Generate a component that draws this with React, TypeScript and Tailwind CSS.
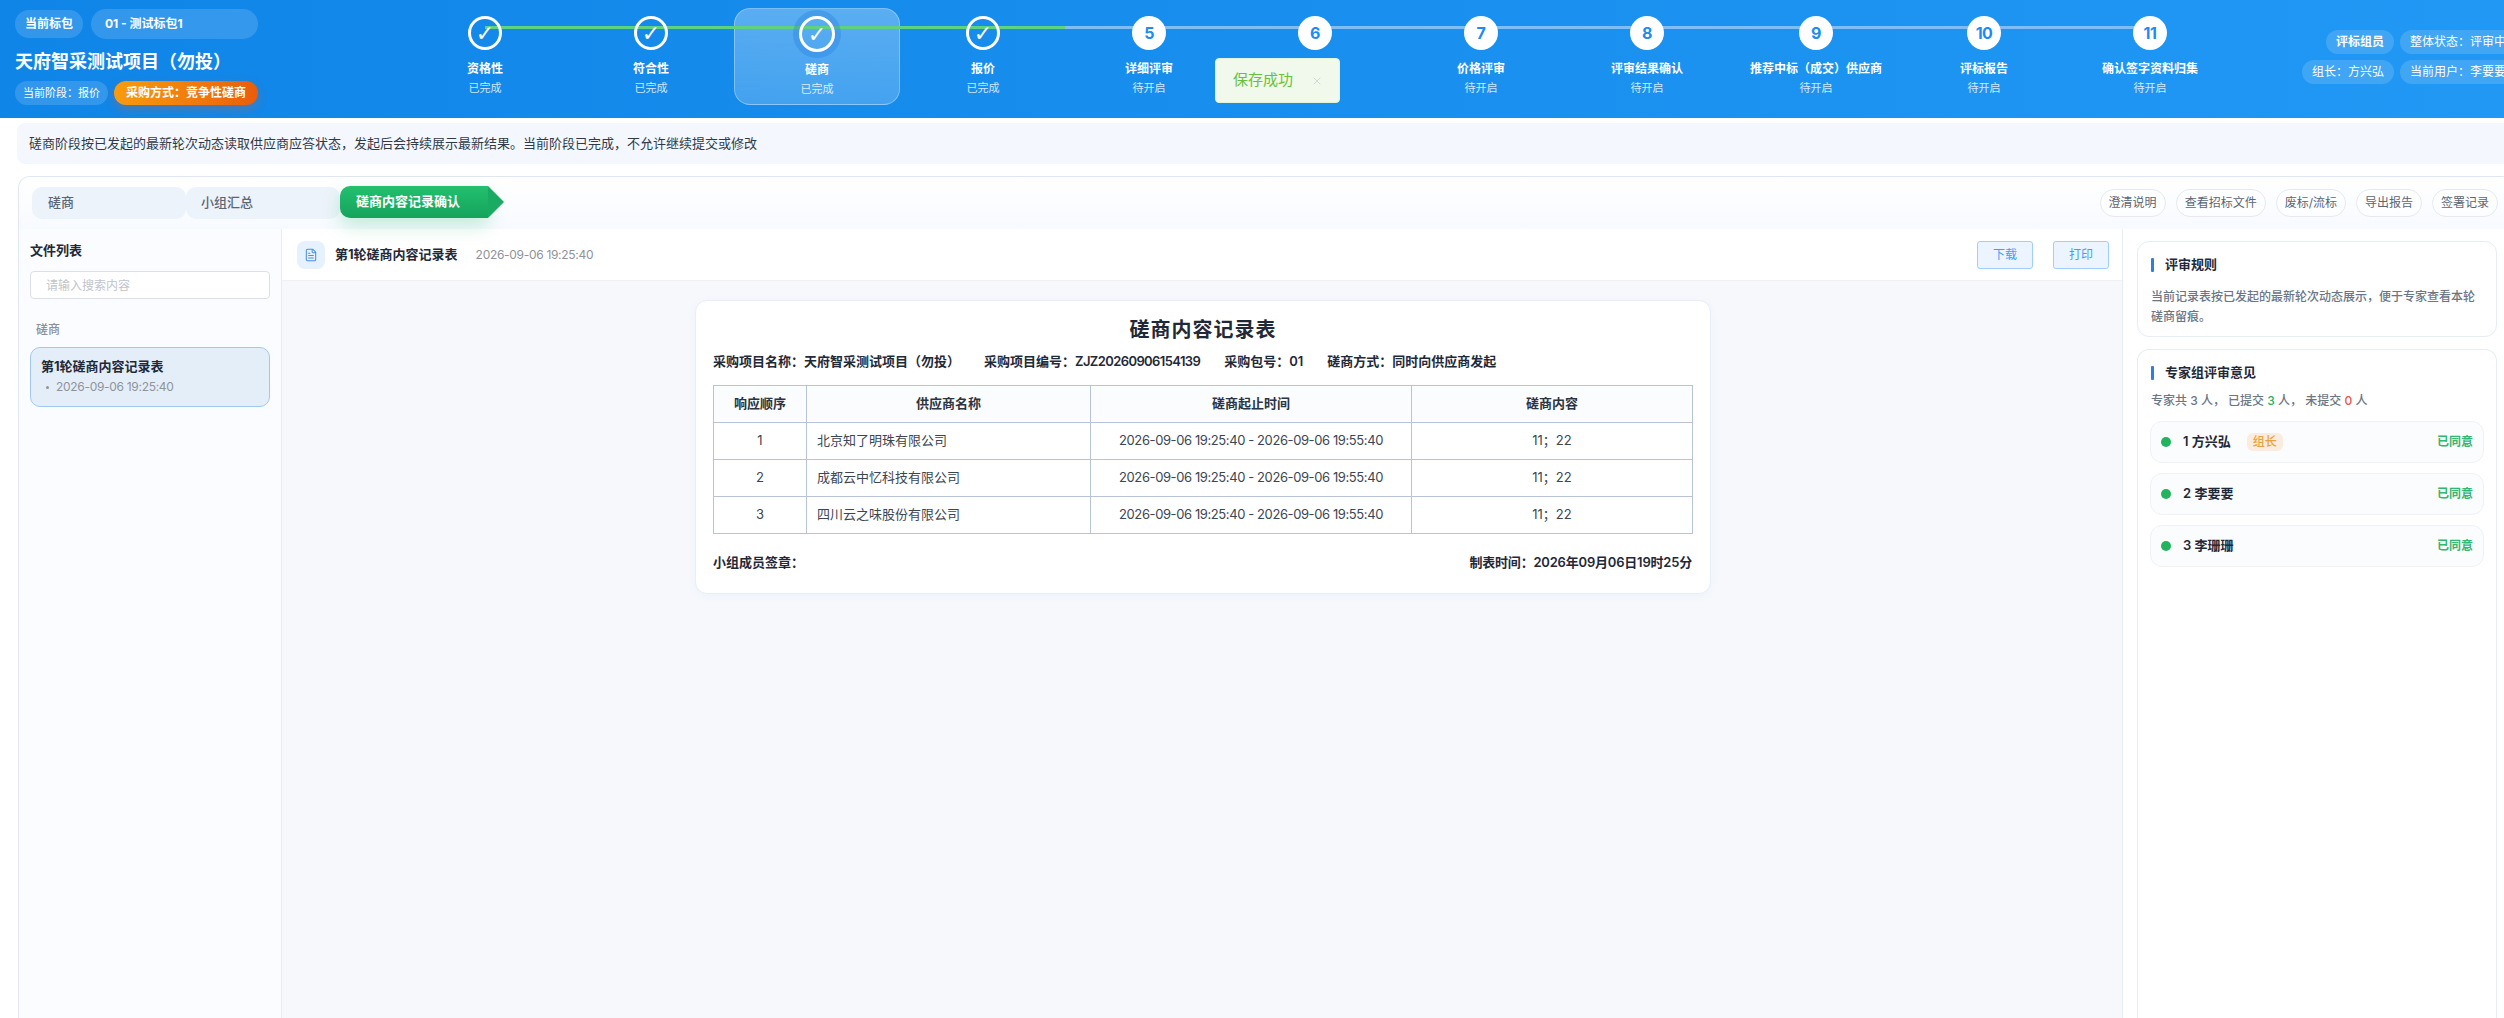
import React from "react";
import { FileText, X } from "lucide-react";

const steps = [
  { name: "资格性", status: "已完成", done: true, w: "w-[166px]" },
  { name: "符合性", status: "已完成", done: true, w: "w-[166px]" },
  { name: "磋商", status: "已完成", done: true, active: true, w: "w-[166px]" },
  { name: "报价", status: "已完成", done: true, w: "w-[166px]" },
  { name: "详细评审", status: "待开启", no: 5, w: "w-[166px]" },
  { name: "商务评审", status: "待开启", no: 6, w: "w-[166px]" },
  { name: "价格评审", status: "待开启", no: 7, w: "w-[166px]" },
  { name: "评审结果确认", status: "待开启", no: 8, w: "w-[166px]" },
  { name: "推荐中标（成交）供应商", status: "待开启", no: 9, w: "w-[172px]" },
  { name: "评标报告", status: "待开启", no: 10, w: "w-[164px]" },
  { name: "确认签字资料归集", status: "待开启", no: 11, w: "w-[168px]" },
];

const rows = [
  { no: 1, name: "北京知了明珠有限公司" },
  { no: 2, name: "成都云中忆科技有限公司" },
  { no: 3, name: "四川云之味股份有限公司" },
];

const experts = [
  { name: "1 方兴弘", leader: true },
  { name: "2 李要要" },
  { name: "3 李珊珊" },
];

const actions = ["澄清说明", "查看招标文件", "废标/流标", "导出报告", "签署记录"];

const timeRange = "2026-09-06 19:25:40 - 2026-09-06 19:55:40";

const Chip: React.FC<{ children: React.ReactNode; className?: string }> = ({ children, className }) => (
  <span className={`flex h-[24px] shrink-0 items-center rounded-full bg-white/15 px-[10px] text-[12px] whitespace-nowrap text-white ${className ?? ""}`}>
    {children}
  </span>
);

const SectionTitle: React.FC<{ children: React.ReactNode }> = ({ children }) => (
  <div className="flex h-[16px] items-center gap-[11px] text-[13px] font-bold text-[#1f2937]">
    <span className="h-[14px] w-[3px] rounded-[1px] bg-[#2d7fe0]" />
    {children}
  </div>
);

export default function App() {
  return (
    <div className="relative flex h-screen w-[2504px] flex-col overflow-hidden bg-white font-['Inter','Noto_Sans_CJK_SC',sans-serif]">
      <header className="flex h-[118px] shrink-0 bg-gradient-to-r from-[#0f85e8] to-[#2098f4]">
        <div className="w-[402px] shrink-0 pl-[15px] pt-[9px]">
          <div className="flex items-center gap-[8px]">
            <span className="flex h-[28px] items-center rounded-full bg-white/15 px-[10px] text-[12px] font-bold text-white">当前标包</span>
            <span className="flex h-[30px] w-[167px] items-center rounded-full bg-white/15 px-[14px] text-[12px] font-bold text-white">01 - 测试标包1</span>
          </div>
          <h1 className="mt-[10px] h-[26px] text-[18px] leading-[26px] font-bold text-white">天府智采测试项目（勿投）</h1>
          <div className="mt-[6px] flex gap-[6px]">
            <span className="flex h-[24px] w-[93px] items-center justify-center rounded-full bg-white/15 text-[11px] text-white">当前阶段：报价</span>
            <span className="flex h-[24px] w-[144px] items-center justify-center rounded-full bg-gradient-to-r from-[#f89c0c] to-[#ea5c0c] text-[12px] font-bold text-white shadow-[0_4px_10px_rgba(234,88,12,0.3)]">采购方式：竞争性磋商</span>
          </div>
        </div>

        <div className="relative mt-[8px] flex h-[97px] shrink-0">
          <div className="absolute top-[18px] left-[83px] h-[3px] w-[580px] bg-[#5fd27f]" />
          <div className="absolute top-[18px] left-[663px] h-[3px] w-[1085px] bg-[#7fbdf5]" />
          {steps.map((s) => (
            <div
              key={s.name}
              className={`flex shrink-0 flex-col items-center pt-[8px] ${s.w} ${s.active ? "rounded-[16px] border border-white/30 bg-gradient-to-b from-white/30 to-white/20 pt-[7px]" : ""}`}
            >
              {s.done ? (
                <span
                  className={`relative z-10 flex items-center justify-center rounded-full border-[3px] border-white font-['DejaVu_Sans'] text-[22px] text-white ${s.active ? "-mt-px -mb-px size-[36px] shadow-[0_0_0_6px_rgba(30,120,220,0.3)]" : "size-[34px]"}`}
                >
                  ✓
                </span>
              ) : (
                <span className="relative z-10 flex size-[34px] items-center justify-center rounded-full bg-white text-[16px] font-bold tracking-[-0.5px] text-[#1c8cf0]">{s.no}</span>
              )}
              <span className="mt-[11px] h-[16px] text-[12px] leading-[16px] font-bold whitespace-nowrap text-white">{s.name}</span>
              <span className="mt-[3px] h-[16px] text-[11px] leading-[16px] text-white/80">{s.status}</span>
            </div>
          ))}
        </div>

        <div className="ml-[68px] flex shrink-0 flex-col gap-[6px] pt-[30px]">
          <div className="flex justify-end gap-[6px]">
            <Chip className="font-bold">评标组员</Chip>
            <Chip>整体状态：评审中</Chip>
          </div>
          <div className="flex justify-end gap-[6px]">
            <Chip>组长：方兴弘</Chip>
            <Chip>当前用户：李要要</Chip>
          </div>
        </div>
      </header>

      <div className="mt-[5px] ml-[17px] flex h-[41px] w-[2600px] shrink-0 items-center rounded-[8px] bg-[#f4f8fe] pl-[12px] text-[13px] text-[#2f3a48]">
        磋商阶段按已发起的最新轮次动态读取供应商应答状态，发起后会持续展示最新结果。当前阶段已完成，不允许继续提交或修改
      </div>

      <div className="mt-[12px] ml-[18px] flex min-h-0 w-[2496px] flex-1 flex-col rounded-t-[12px] border border-b-0 border-[#dfe8f2]">
        <div className="flex h-[52px] shrink-0 items-start rounded-t-[12px] bg-gradient-to-b from-white to-[#f7faff] pt-[10px] pr-[15px] pl-[13px]">
          <span className="flex h-[32px] w-[154px] items-center rounded-[10px] bg-[#edf3fa] pl-[16px] text-[13px] font-medium text-[#5b6675]">磋商</span>
          <span className="flex h-[32px] w-[154px] items-center rounded-[10px] bg-[#edf3fa] pl-[15px] text-[13px] font-medium text-[#5b6675]">小组汇总</span>
          <span className="relative z-10 -mt-px flex">
            <span className="flex h-[32px] w-[148px] items-center rounded-l-[10px] bg-gradient-to-b from-[#22c06f] to-[#16a35c] pl-[16px] text-[13px] font-bold text-white shadow-[0_8px_18px_rgba(34,192,111,0.25)]">磋商内容记录确认</span>
            <span className="h-0 w-0 border-y-[16px] border-l-[16px] border-y-transparent border-l-[#1aab62]" />
          </span>
          <div className="ml-auto flex gap-[10px] pt-[2px]">
            {actions.map((a) => (
              <span key={a} className="flex h-[28px] items-center rounded-full border border-[#e5eaf1] bg-white/60 px-[8px] text-[12px] text-[#5a6675]">{a}</span>
            ))}
          </div>
        </div>

        <div className="flex min-h-0 flex-1">
          <aside className="w-[263px] shrink-0 border-r border-[#e8edf4] bg-[#fbfcff] px-[11px]">
            <div className="mt-[12px] h-[18px] text-[13px] leading-[18px] font-bold text-[#1f2937]">文件列表</div>
            <input
              placeholder="请输入搜索内容"
              className="mt-[12px] h-[28px] w-[240px] rounded-[4px] border border-[#dcdfe6] bg-white px-[15px] text-[12px] outline-none placeholder:text-[#c0c4cc]"
            />
            <div className="mt-[23px] h-[16px] pl-[6px] text-[12px] leading-[16px] font-medium text-[#8a8f99]">磋商</div>
            <div className="mt-[9px] h-[60px] w-[240px] rounded-[10px] border border-[#a3c8f0] bg-[#e4eef9] px-[10px] pt-[9px]">
              <div className="h-[18px] text-[13px] leading-[18px] font-bold text-[#1f2937]">第1轮磋商内容记录表</div>
              <div className="mt-[4px] flex h-[16px] items-center pl-[5px] text-[12px] tracking-[-0.3px] text-[#909399]">
                <span className="mr-[7px] size-[3px] rounded-full bg-[#909399]" />
                2026-09-06 19:25:40
              </div>
            </div>
          </aside>

          <main className="flex w-[1841px] shrink-0 flex-col border-r border-[#e8edf4]">
            <div className="flex h-[52px] shrink-0 items-center border-b border-[#eef1f6] bg-white pr-[13px] pl-[15px]">
              <span className="flex size-[28px] items-center justify-center rounded-[8px] bg-[#e5f1fc]">
                <FileText size={14} strokeWidth={1.8} className="text-[#4a90e2]" />
              </span>
              <span className="ml-[10px] text-[13px] font-bold text-[#1f2937]">第1轮磋商内容记录表</span>
              <span className="ml-[18px] text-[12px] tracking-[-0.3px] text-[#909399]">2026-09-06 19:25:40</span>
              <div className="ml-auto flex gap-[20px]">
                <span className="flex h-[28px] w-[56px] items-center justify-center rounded-[3px] border border-[#a0cfff] bg-[#ecf5ff] text-[12px] text-[#409eff]">下载</span>
                <span className="flex h-[28px] w-[56px] items-center justify-center rounded-[3px] border border-[#a0cfff] bg-[#ecf5ff] text-[12px] text-[#409eff]">打印</span>
              </div>
            </div>

            <div className="flex min-h-0 flex-1 justify-center bg-[#f6f8fc] pt-[19px] pl-[2px]">
              <div className="h-[294px] w-[1016px] rounded-[12px] border border-[#e8eef6] bg-white px-[17px] shadow-[0_2px_8px_rgba(120,150,190,0.06)]">
                <h2 className="mt-[15px] h-[28px] text-center text-[20px] leading-[28px] font-bold tracking-[1px] text-[#1f2937]">磋商内容记录表</h2>
                <div className="mt-[8px] flex h-[18px] gap-[24px] text-[13px] leading-[18px] font-semibold text-[#1f2937]">
                  <span>采购项目名称：天府智采测试项目（勿投）</span>
                  <span>采购项目编号：<span className="tracking-[-0.6px]">ZJZ20260906154139</span></span>
                  <span>采购包号：01</span>
                  <span>磋商方式：同时向供应商发起</span>
                </div>
                <table className="mt-[15px] w-[979px] table-fixed border-collapse border border-[#b8c4d6] text-[13px] text-[#3c4652]">
                  <colgroup>
                    <col className="w-[93px]" />
                    <col className="w-[284px]" />
                    <col className="w-[321px]" />
                    <col className="w-[281px]" />
                  </colgroup>
                  <thead>
                    <tr className="h-[37px] bg-[#fbfcfe] font-bold text-[#2b3442]">
                      <th className="border border-[#b8c4d6] font-bold">响应顺序</th>
                      <th className="border border-[#b8c4d6] font-bold">供应商名称</th>
                      <th className="border border-[#b8c4d6] font-bold">磋商起止时间</th>
                      <th className="border border-[#b8c4d6] font-bold">磋商内容</th>
                    </tr>
                  </thead>
                  <tbody>
                    {rows.map((r) => (
                      <tr key={r.no} className="h-[37px]">
                        <td className="border border-[#b8c4d6] text-center">{r.no}</td>
                        <td className="border border-[#b8c4d6] pl-[10px]">{r.name}</td>
                        <td className="border border-[#b8c4d6] text-center tracking-[-0.4px]">{timeRange}</td>
                        <td className="border border-[#b8c4d6] text-center">11；22</td>
                      </tr>
                    ))}
                  </tbody>
                </table>
                <div className="mt-[19px] flex w-[979px] justify-between text-[13px] font-semibold text-[#1f2937]">
                  <span>小组成员签章：</span>
                  <span className="tracking-[-0.2px]">制表时间：2026年09月06日19时25分</span>
                </div>
              </div>
            </div>
          </main>

          <aside className="flex min-w-0 flex-1 flex-col gap-[12px] bg-white pt-[12px] pl-[14px]">
            <section className="h-[96px] w-[360px] shrink-0 rounded-[12px] border border-[#e6edf5] px-[13px] pt-[15px]">
              <SectionTitle>评审规则</SectionTitle>
              <p className="mt-[14px] text-[12px] leading-[20px] font-medium text-[#6b7685]">当前记录表按已发起的最新轮次动态展示，便于专家查看本轮磋商留痕。</p>
            </section>
            <section className="w-[360px] flex-1 rounded-t-[12px] border border-b-0 border-[#e6edf5] px-[12px] pt-[15px]">
              <div className="pl-px"><SectionTitle>专家组评审意见</SectionTitle></div>
              <p className="mt-[10px] h-[20px] pl-px text-[12px] leading-[20px] font-medium text-[#6b7685]">
                专家共 3 人， 已提交 <span className="text-[#22b35e]">3</span> 人， 未提交 <span className="text-[#ef5350]">0</span> 人
              </p>
              <div className="mt-[10px] flex flex-col gap-[10px]">
                {experts.map((e) => (
                  <div key={e.name} className="flex h-[42px] w-[334px] items-center rounded-[12px] border border-[#eef2f7] bg-[#fbfcfe] pr-[10px] pl-[10px]">
                    <span className="size-[10px] rounded-full bg-[#22b35e]" />
                    <span className="ml-[12px] text-[13px] font-semibold text-[#1f2937]">{e.name}</span>
                    {e.leader && (
                      <span className="ml-[16px] flex h-[18px] w-[36px] items-center justify-center rounded-[6px] bg-[#faecdf] text-[12px] font-medium text-[#e6a23c]">组长</span>
                    )}
                    <span className="ml-auto text-[12px] font-bold text-[#2fb873]">已同意</span>
                  </div>
                ))}
              </div>
            </section>
          </aside>
        </div>
      </div>

      <div className="absolute top-[58px] left-[1215px] z-20 flex h-[45px] w-[125px] items-center rounded-[4px] border border-[#e1f3d8] bg-[#f0f9eb] pl-[17px] text-[15px] text-[#67c23a]">
        保存成功
        <X size={12} strokeWidth={1.5} className="ml-[18px] text-[#c8c9cc]" />
      </div>
    </div>
  );
}
